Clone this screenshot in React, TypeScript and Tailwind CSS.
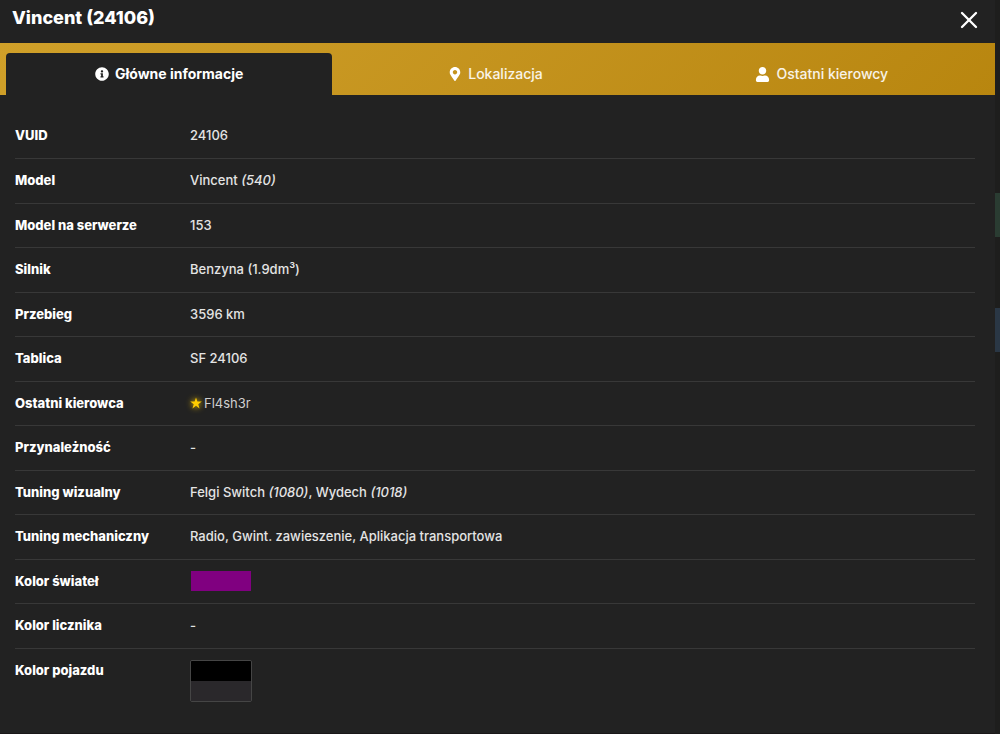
import * as React from 'react';
import { clsx } from 'clsx';
import { X } from 'lucide-react';
import { FaInfoCircle, FaMapMarkerAlt, FaUser } from 'react-icons/fa';

type Tab = {
  id: string;
  label: string;
  icon: React.ReactNode;
};

const tabs: Tab[] = [
  { id: 'info', label: 'Główne informacje', icon: <FaInfoCircle className="size-3.5" /> },
  { id: 'location', label: 'Lokalizacja', icon: <FaMapMarkerAlt className="size-3.5" /> },
  { id: 'drivers', label: 'Ostatni kierowcy', icon: <FaUser className="size-[15px]" /> },
];

const StarIcon = () => (
  <svg
    viewBox="0 0 24 24"
    fill="currentColor"
    aria-hidden="true"
    className="size-3 text-[#ffcc00] drop-shadow-[0_0_3px_#ffcc00]"
  >
    <path d="M12 1l2.8 8.2h8.7l-7 5.2 2.6 8.4L12 17.7l-7.1 5.1 2.6-8.4-7-5.2h8.7z" />
  </svg>
);

const rows: { label: string; value: React.ReactNode }[] = [
  { label: 'VUID', value: '24106' },
  {
    label: 'Model',
    value: (
      <>
        Vincent <em>(540)</em>
      </>
    ),
  },
  { label: 'Model na serwerze', value: '153' },
  { label: 'Silnik', value: 'Benzyna (1.9dm³)' },
  { label: 'Przebieg', value: '3596 km' },
  { label: 'Tablica', value: 'SF 24106' },
  {
    label: 'Ostatni kierowca',
    value: (
      <a href="#driver" className="flex items-center gap-0.5 font-normal text-[#d0d0d0]">
        <StarIcon />
        Fl4sh3r
      </a>
    ),
  },
  { label: 'Przynależność', value: '-' },
  {
    label: 'Tuning wizualny',
    value: (
      <>
        Felgi Switch <em>(1080)</em>, Wydech <em>(1018)</em>
      </>
    ),
  },
  { label: 'Tuning mechaniczny', value: 'Radio, Gwint. zawieszenie, Aplikacja transportowa' },
  {
    label: 'Kolor świateł',
    value: (
      <div className="w-[62px] border-x border-transparent">
        <div className="h-5 bg-[#800080]" />
      </div>
    ),
  },
  { label: 'Kolor licznika', value: '-' },
  {
    label: 'Kolor pojazdu',
    value: (
      <div className="w-[62px] overflow-hidden rounded-xs border border-[#454545]">
        <div className="h-5 bg-black" />
        <div className="h-5 bg-[#2a282b]" />
      </div>
    ),
  },
];

const TabBar = ({ active, onSelect }: { active: string; onSelect: (id: string) => void }) => (
  <div
    role="tablist"
    className="grid grid-cols-3 bg-linear-135 from-[#d0a029] to-[#b8860f] pt-2.5 pr-2.5 pl-1.5"
  >
    {tabs.map((tab) => (
      <button
        key={tab.id}
        type="button"
        role="tab"
        aria-selected={active === tab.id}
        onClick={() => onSelect(tab.id)}
        className={clsx(
          'flex h-[42px] items-center justify-center gap-1.5 rounded-t text-sm',
          active === tab.id ? 'bg-[#222222] font-bold text-white' : 'font-medium text-white/90',
        )}
      >
        <span className="text-white">{tab.icon}</span>
        {tab.label}
      </button>
    ))}
  </div>
);

const VehicleDetails = () => (
  <table className="w-full text-left text-[13px] leading-5">
    <tbody>
      {rows.map((row) => (
        <tr
          key={row.label}
          className="h-11 border-b border-[#383838] align-top last:border-b-0 even:h-[45px]"
        >
          <th scope="row" className="w-[175px] pt-[11px] pb-[11px] font-extrabold text-white">
            {row.label}
          </th>
          <td className="pt-[11px] pb-[11px] font-medium text-[#e4e4e4]">{row.value}</td>
        </tr>
      ))}
    </tbody>
  </table>
);

export default function App() {
  const [active, setActive] = React.useState('info');

  return (
    <div className="flex min-h-screen bg-[#1e1e1d] font-['Inter',sans-serif]">
      <main
        role="dialog"
        aria-labelledby="dialog-title"
        className="min-w-0 flex-1 border-b border-[#1a1718] bg-[#222222]"
      >
        <header className="flex h-[43px] items-center justify-between pr-3 pl-3">
          <h1 id="dialog-title" className="pb-2 text-lg leading-6 font-extrabold text-white">
            Vincent (24106)
          </h1>
          <button type="button" aria-label="Zamknij" className="pb-1 text-white">
            <X className="size-7" strokeWidth={2} />
          </button>
        </header>
        <TabBar active={active} onSelect={setActive} />
        <div className="pt-[19px] pr-5 pb-5 pl-[15px]">
          <VehicleDetails />
        </div>
      </main>
      {/* edge of the list behind the dialog */}
      <div className="flex w-[5px] flex-col pt-[193px]">
        <div className="h-11 bg-[#2a3c32]" />
        <div className="mt-[71px] h-11 bg-[#2a3745]" />
      </div>
    </div>
  );
}
